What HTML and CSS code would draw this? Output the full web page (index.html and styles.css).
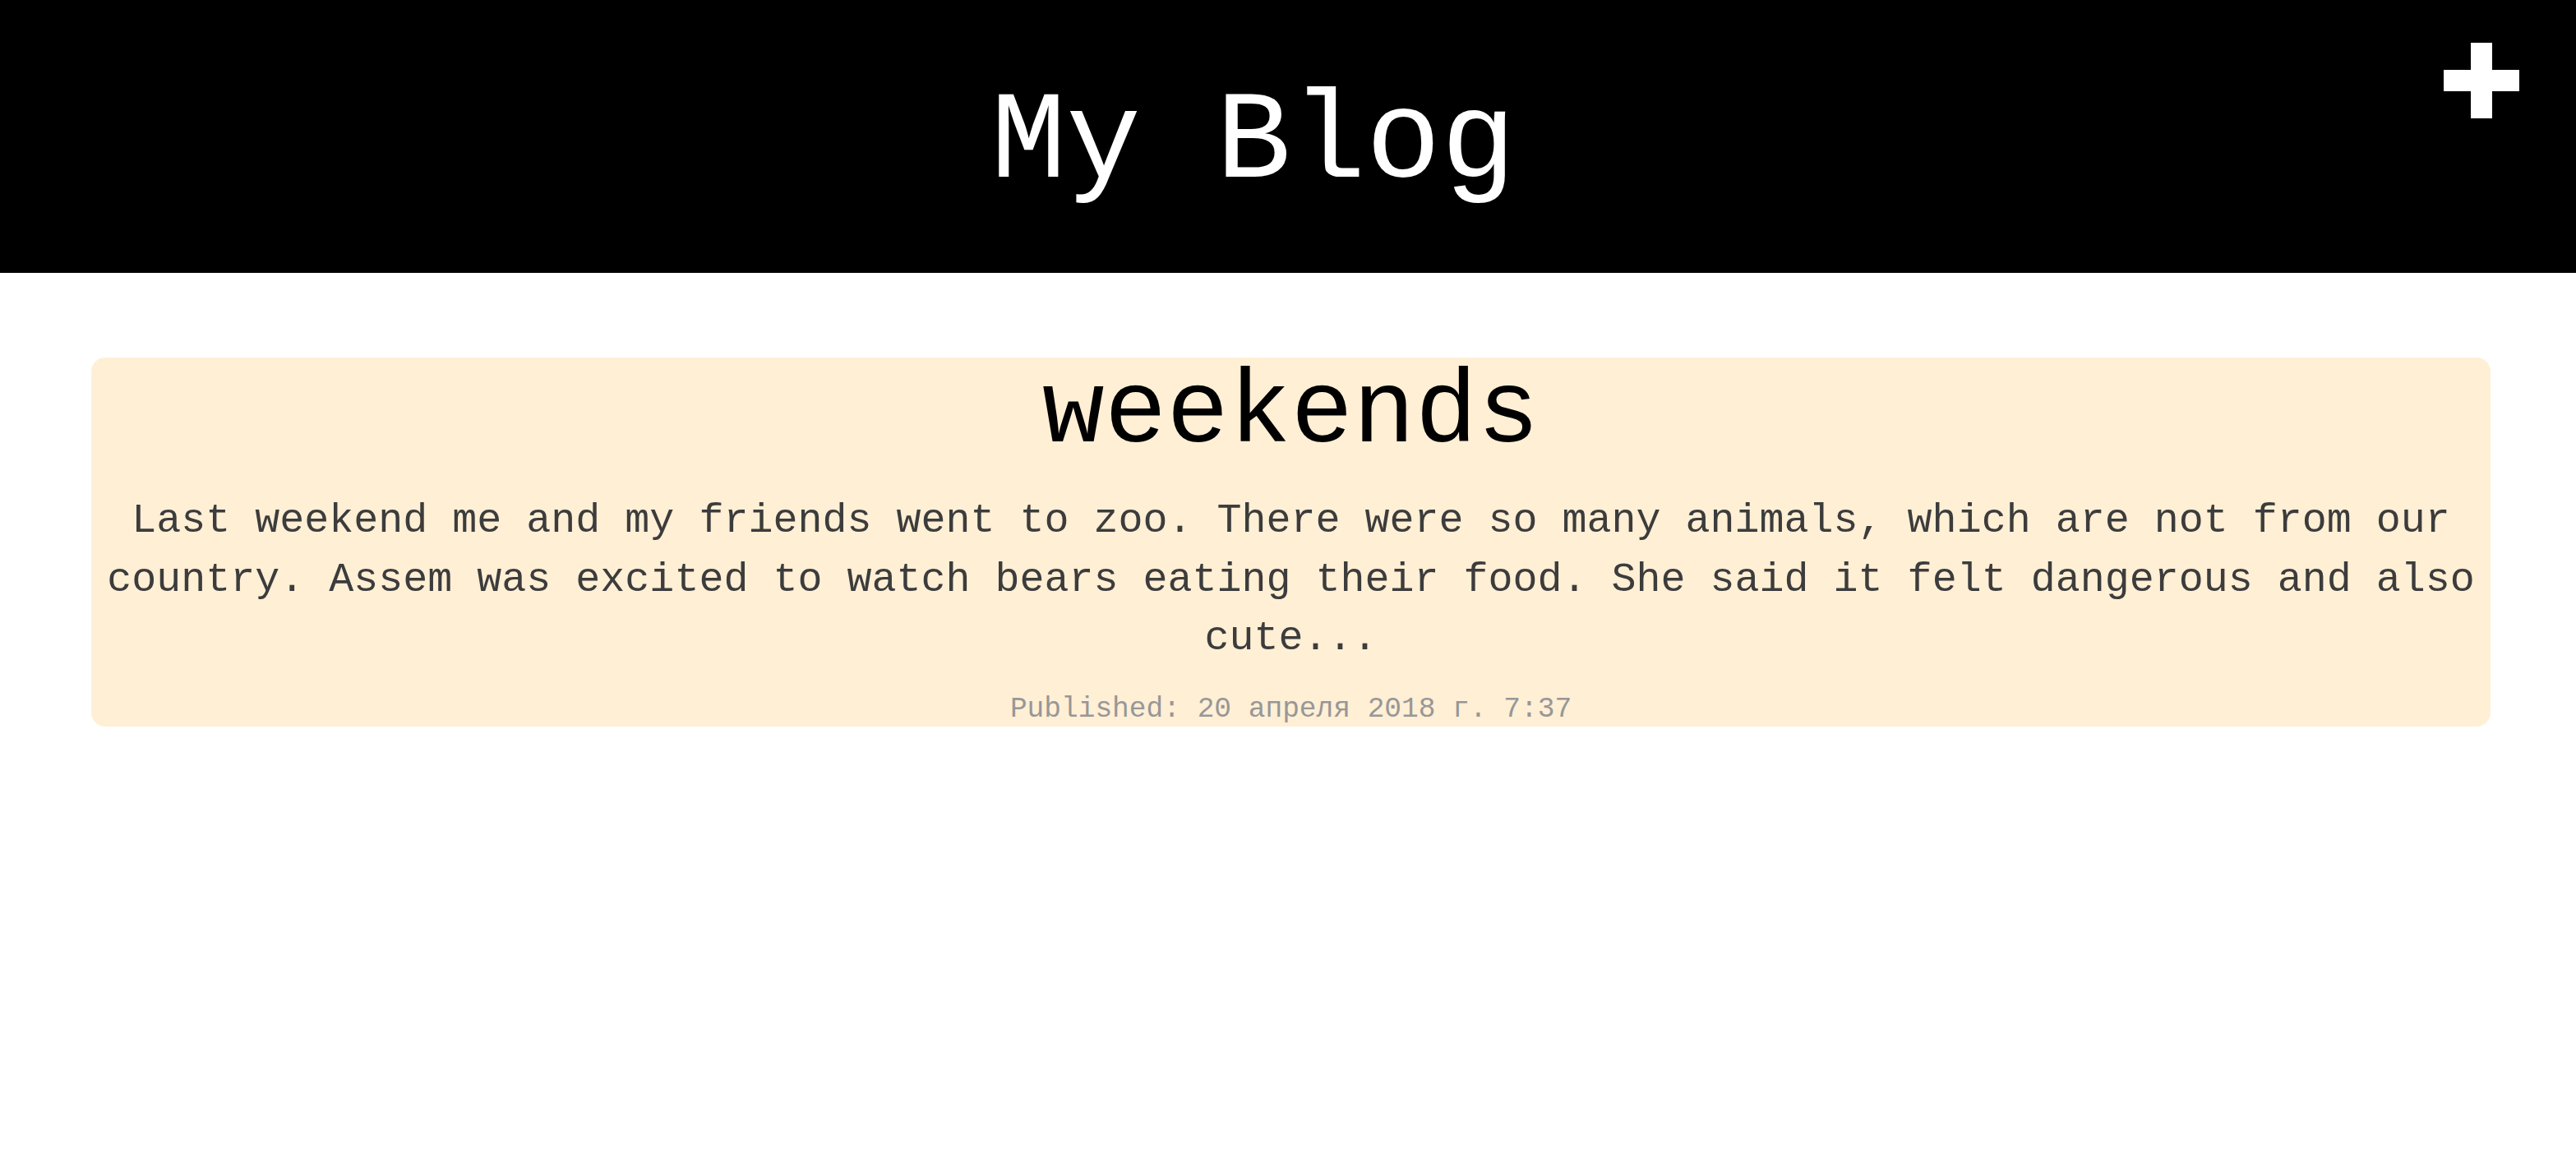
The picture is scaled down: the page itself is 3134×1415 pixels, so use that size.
FILE: index.html
```html
<!DOCTYPE html>
<html lang="en">
<head>
<meta charset="utf-8">
<title>My Blog</title>
<link rel="stylesheet" href="styles.css">
</head>
<body>
<header class="site-header">
  <h1 class="site-title">My Blog</h1>
  <button class="add-btn" aria-label="Add post">
    <svg width="92" height="92" viewBox="0 0 92 92"><path d="M33 0h26v33h33v26H59v33H33V59H0V33h33z" fill="#fff"/></svg>
  </button>
</header>
<main class="posts">
  <article class="post">
    <h2 class="post-title">weekends</h2>
    <p class="post-body">Last weekend me and my friends went to zoo. There were so many animals, which are not from our country. Assem was excited to watch bears eating their food. She said it felt dangerous and also cute...</p>
    <p class="post-date">Published: 20 апреля 2018 г. 7:37</p>
  </article>
</main>
</body>
</html>
```
FILE: styles.css
```css
* { box-sizing: border-box; }
html, body { margin: 0; padding: 0; background: #fff; }
body { font-family: "Liberation Mono", "Courier New", monospace; }

.site-header {
  position: relative;
  display: flex;
  height: 332px;
  padding-top: 99px;
  background: #000;
}
.site-title {
  flex: 1;
  margin: 0;
  padding-right: 84px;
  text-align: center;
  font-size: 152px;
  line-height: 152px;
  font-weight: normal;
  color: #fff;
}
.add-btn {
  position: absolute;
  top: 52px;
  right: 69px;
  width: 92px;
  height: 92px;
  padding: 0;
  border: 0;
  background: transparent;
  cursor: pointer;
}
.add-btn svg { display: block; }

.posts {
  padding: 103px 104px 0 111px;
}
.post {
  background: #ffefd5;
  border-radius: 17px;
  padding: 6px 16px 0;
  height: 449px;
  text-align: center;
}
.post-title {
  margin: 0;
  font-size: 126px;
  line-height: 126px;
  font-weight: normal;
  color: #000;
}
.post-body {
  margin: 31px 0 0;
  font-size: 50px;
  line-height: 71.5px;
  color: #3c3c3c;
}
.post-date {
  margin: 30px 0 0;
  font-size: 34.5px;
  line-height: 40.8px;
  color: #979797;
}
```
